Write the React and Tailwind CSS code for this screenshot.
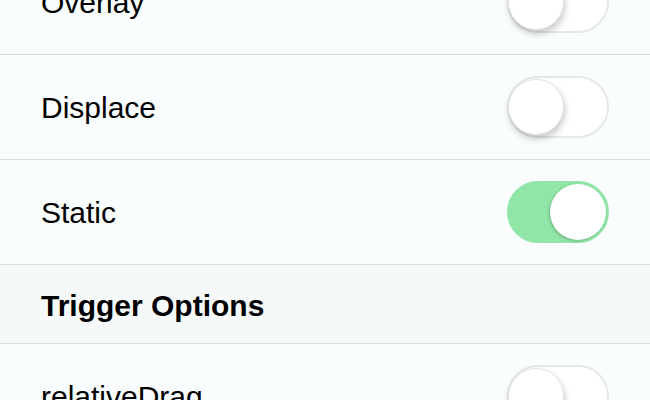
import React from 'react';

const rows = [
    { type: 'item', label: 'Overlay', on: false },
    { type: 'item', label: 'Displace', on: false },
    { type: 'item', label: 'Static', on: true },
    { type: 'header', label: 'Trigger Options' },
    { type: 'item', label: 'relativeDrag', on: false },
];

function Toggle({ on }) {
    return (
        <div className={`relative w-[102px] h-[62px] rounded-full border-2 ${on ? 'bg-[#90e5a7] border-[#90e5a7]' : 'bg-white border-[#e6e8e8]'}`}>
            <div className={`absolute top-[1px] w-[56px] h-[56px] rounded-full bg-white ${on ? 'right-[1px] shadow-[-1px_1px_3px_rgba(0,0,0,0.22)]' : 'left-[-1px] shadow-[1px_4px_7px_rgba(0,0,0,0.22)] border border-[#e4e4e4]'}`} />
        </div>
    );
}

export default function App() {
    return (
        <div className="w-[650px] h-[400px] overflow-hidden bg-[#f9fdfd] text-black font-['Liberation_Sans',Arial,sans-serif]">
            <div className="-mt-[50px]">
                {rows.map((r, i) => r.type === 'header' ? (
                    <div key={i} className="h-[79px] bg-[#f5f9f9] border-b border-[#dadede] px-[41px] flex items-center pt-[2px]">
                        <span className="text-[30px] font-bold">{r.label}</span>
                    </div>
                ) : (
                    <div key={i} className="h-[105px] border-b border-[#dadede] px-[41px] flex items-center justify-between">
                        <span className="text-[30px]">{r.label}</span>
                        <Toggle on={r.on} />
                    </div>
                ))}
            </div>
        </div>
    );
}
